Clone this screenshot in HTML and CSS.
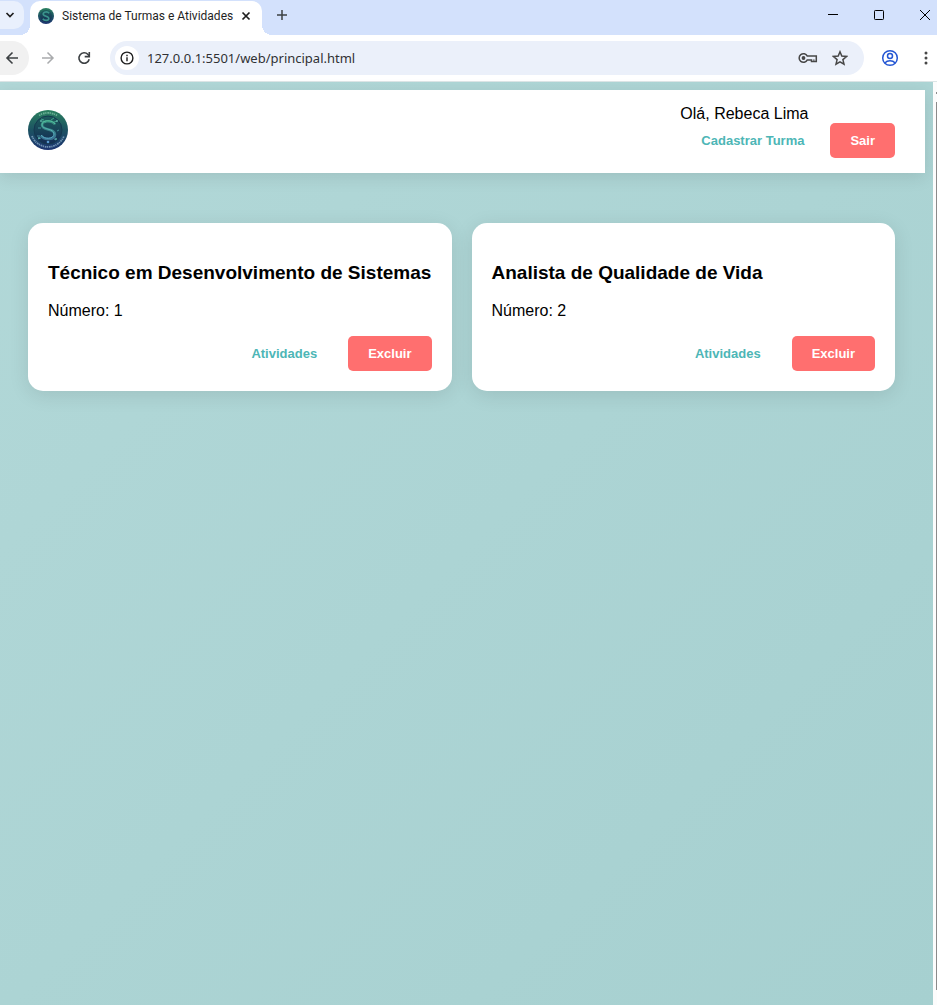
FILE: index.html
```html
<!DOCTYPE html>
<html lang="pt-BR">
<head>
<meta charset="utf-8">
<meta name="viewport" content="width=device-width, initial-scale=1">
<title>Sistema de Turmas e Atividades</title>
<link rel="stylesheet" href="styles.css">
</head>
<body>
<svg class="defs" aria-hidden="true">
  <defs>
    <linearGradient id="rim" x1="0" y1="0" x2="0" y2="1">
      <stop offset="0" stop-color="#2a805f"/><stop offset=".5" stop-color="#1c5262"/><stop offset="1" stop-color="#1d3470"/>
    </linearGradient>
    <linearGradient id="disc" x1="0" y1="0" x2="0" y2="1">
      <stop offset="0" stop-color="#1d5c5c"/><stop offset="1" stop-color="#142c55"/>
    </linearGradient>
    <linearGradient id="letter" x1="0" y1="0" x2="0" y2="1">
      <stop offset="0" stop-color="#4fc09a"/><stop offset="1" stop-color="#58a6c4"/>
    </linearGradient>
  </defs>
</svg>

<header class="tabs">
  <button class="tab-search" aria-label="Pesquisar guias"><svg width="10" height="6" viewBox="0 0 10 6"><path d="M1.5 1 5 4.5 8.500 1" fill="none" stroke="#1f1f1f" stroke-width="1.700"/></svg></button>
  <div class="tab">
    <svg class="favicon" width="16" height="16" viewBox="0 0 40 40" aria-hidden="true">
      <circle cx="20" cy="20" r="20" fill="url(#rim)"/><circle cx="20" cy="20" r="15" fill="url(#disc)"/>
      <path d="M28 13C24 8 13 9 13 15c0 7 14 4 14 11 0 6-11 7-15 1" fill="none" stroke="#3b948c" stroke-width="4"/>
    </svg>
    <span class="tab-title">Sistema de Turmas e Atividades</span>
    <button class="tab-close" aria-label="Fechar guia"><svg width="10" height="10" viewBox="0 0 10 10"><path d="m1.500 1.500 7 7m0-7-7 7" stroke="#1f1f1f" stroke-width="1.700"/></svg></button>
  </div>
  <button class="new-tab" aria-label="Nova guia"><svg width="12" height="12" viewBox="0 0 12 12"><path d="M6 1v10M1 6h10" stroke="#3c4043" stroke-width="1.500"/></svg></button>
  <div class="window-controls">
    <button aria-label="Minimizar"><svg width="12" height="12" viewBox="0 0 12 12"><path d="M1 5.500h10" stroke="#000"/></svg></button>
    <button aria-label="Maximizar"><svg width="12" height="12" viewBox="0 0 12 12"><rect x="1.500" y="1.500" width="9" height="9" rx=".8" fill="none" stroke="#000"/></svg></button>
    <button aria-label="Fechar"><svg width="12" height="12" viewBox="0 0 12 12"><path d="m1 1 10 10M11 1 1 11" stroke="#000"/></svg></button>
  </div>
</header>

<nav class="toolbar" aria-label="Navegação">
  <button class="nav back" aria-label="Voltar"><svg width="14" height="14" viewBox="0 0 14 14"><path d="M13 7H2m5.500-5.500L2 7l5.500 5.500" fill="none" stroke="#3c4043" stroke-width="1.600"/></svg></button>
  <button class="nav" aria-label="Avançar"><svg width="14" height="14" viewBox="0 0 14 14"><path d="M1 7h11M6.500 1.500 12 7l-5.500 5.500" fill="none" stroke="#a9abad" stroke-width="1.500"/></svg></button>
  <button class="nav" aria-label="Recarregar"><svg width="14" height="14" viewBox="0 0 14 14"><path d="M12.200 8.200A5.200 5.200 0 1 1 11 3.500L12.300 5" fill="none" stroke="#3c4043" stroke-width="1.600"/><path d="M12.300 1v4.600H7.700" fill="none" stroke="#3c4043" stroke-width="1.600"/></svg></button>
  <div class="omnibox">
    <button class="site-info" aria-label="Informações do site"><svg width="14" height="14" viewBox="0 0 14 14"><circle cx="7" cy="7" r="5.900" fill="none" stroke="#1f1f1f" stroke-width="1.400"/><path d="M7 6.200v4M7 3.700v1.500" stroke="#1f1f1f" stroke-width="1.400"/></svg></button>
    <input class="url" aria-label="Endereço" value="127.0.0.1:5501/web/principal.html">
    <button class="omni-action" aria-label="Senhas"><svg width="20" height="12" viewBox="0 0 20 12"><path d="M9.300 4.100A4.300 4.300 0 1 0 9.300 7.900H13.500V9.500H18.300V4.100Z" fill="none" stroke="#474747" stroke-width="1.500"/><circle cx="5.500" cy="6" r="1.900" fill="#474747"/><path d="M15.900 9.500V7.300" stroke="#474747"/></svg></button>
    <button class="omni-action" aria-label="Favoritar"><svg width="16" height="16" viewBox="0 0 16 16"><path d="m8 1.800 1.800 4.300 4.700.4-3.600 3.100 1.100 4.600L8 11.800l-4 2.400 1.100-4.600-3.600-3.100 4.700-.4Z" fill="none" stroke="#474747" stroke-width="1.500"/></svg></button>
  </div>
  <button class="profile" aria-label="Perfil"><svg width="18" height="18" viewBox="0 0 18 18" fill="none" stroke="#2456d3" stroke-width="1.500"><circle cx="9" cy="9" r="7.300"/><circle cx="9" cy="7" r="2.500"/><path d="M3.800 14c1.300-1.400 3-2.200 5.200-2.200s3.900.8 5.200 2.200"/></svg></button>
  <button class="menu" aria-label="Menu"><svg width="4" height="14" viewBox="0 0 4 14" fill="#474747"><circle cx="2" cy="2" r="1.500"/><circle cx="2" cy="7" r="1.500"/><circle cx="2" cy="12" r="1.500"/></svg></button>
</nav>

<div class="viewport">
  <div class="page">
    <header class="site-header">
      <svg class="logo" width="40" height="40" viewBox="0 0 40 40" role="img" aria-label="Sistema de Turmas e Atividades">
        <circle cx="20" cy="20" r="20" fill="url(#rim)"/>
        <circle cx="20" cy="20" r="14" fill="url(#disc)" stroke="#153950"/>
        <g fill="none" stroke="url(#letter)">
          <path d="M27 14.500c-2-4-13-5-13 .5 0 6 13 3 13 9.500 0 5.500-11 6-14 1" stroke-width="2.600" opacity=".55"/>
          <path d="M27 14c-2-4-13-5-13 1 0 5 12 3 12 9 0 5-10 6-13 1" stroke-width="1"/>
          <path d="m23 10 3-2M26 12l3-1M13 18h-3M16 10l-3-1M13 28l-3 1M29 21l2-1M26 29l2 1M18 12l-4-1M12 26H9" stroke-width="1" opacity=".7"/>
        </g>
        <g fill="#69c7b4" opacity=".8"><circle cx="29" cy="11" r="1"/><circle cx="13" cy="11" r="1"/><circle cx="11" cy="28" r="1"/><circle cx="28" cy="29" r="1"/></g>
        <circle cx="20" cy="32" r="1.300" fill="#5b9bd0"/>
        <path d="M11 5.500A17 17 0 0 1 29 5.500" fill="none" stroke="#7fc3a5" stroke-width="1.800" stroke-dasharray="1.700 .6 1.200 .9" opacity=".75"/>
        <path d="M4 26A17.200 17.200 0 0 0 36 26" fill="none" stroke="#8eb2cc" stroke-width="1.800" stroke-dasharray="1.700 .6 1.200 .8" opacity=".75"/>
      </svg>
      <div class="account">
        <span class="greeting">Olá, Rebeca Lima</span>
        <div class="account-actions">
          <button class="btn btn-link">Cadastrar Turma</button>
          <button class="btn btn-danger">Sair</button>
        </div>
      </div>
    </header>
    <main class="classes">
      <article class="card">
        <h3>Técnico em Desenvolvimento de Sistemas</h3>
        <p>Número: 1</p>
        <div class="card-actions">
          <button class="btn btn-link">Atividades</button>
          <button class="btn btn-danger">Excluir</button>
        </div>
      </article>
      <article class="card">
        <h3>Analista de Qualidade de Vida</h3>
        <p>Número: 2</p>
        <div class="card-actions">
          <button class="btn btn-link">Atividades</button>
          <button class="btn btn-danger">Excluir</button>
        </div>
      </article>
    </main>
  </div>
  <div class="scrollbar" aria-hidden="true"><div class="arrow"></div><div class="thumb"></div></div>
</div>
</body>
</html>
```
FILE: styles.css
```css
* { box-sizing: border-box; }

body {
  margin: 0;
  min-height: 100vh;
  display: flex;
  flex-direction: column;
  overflow-x: hidden;
  font-family: "Liberation Sans", Arial, sans-serif;
  font-size: 16px;
  line-height: 18px;
  color: #000;
}

button {
  display: inline-flex;
  align-items: center;
  justify-content: center;
  flex: none;
  margin: 0;
  padding: 0;
  border: 0;
  background: none;
  font: inherit;
  cursor: pointer;
}

svg { display: block; flex: none; }
.defs { position: absolute; width: 0; height: 0; }

/* Tab strip */
.tabs {
  display: flex;
  height: 35px;
  background: #d3e1fc;
}
.tab-search {
  width: 24px;
  height: 28px;
  margin-top: 1px;
  padding-right: 4px;
  border-radius: 0 10px 10px 0;
  background: #e9f0fd;
}
.tab {
  position: relative;
  display: flex;
  align-items: center;
  width: 232px;
  margin: 1px 0 0 6px;
  padding: 0 10px 5px 8px;
  border-radius: 10px 10px 0 0;
  background: #fff;
}
.tab::before,
.tab::after {
  content: "";
  position: absolute;
  bottom: 0;
  width: 10px;
  height: 10px;
}
.tab::before {
  right: 100%;
  background: radial-gradient(circle at 0 0, transparent 10px, #fff 10px);
}
.tab::after {
  left: 100%;
  background: radial-gradient(circle at 100% 0, transparent 10px, #fff 10px);
}
.tab-title {
  flex: 1;
  margin-left: 8px;
  font-family: Roboto, sans-serif;
  font-size: 12px;
  line-height: 16px;
  white-space: nowrap;
  color: #1f1f1f;
}
.tab-close { width: 12px; height: 16px; }
.new-tab { width: 20px; height: 28px; margin: 1px 0 0 10px; }
.window-controls { display: flex; margin-left: auto; }
.window-controls button { width: 46px; height: 30px; }
.window-controls button:last-child {
  justify-content: flex-start;
  width: 18px;
  margin-left: 17px;
}

/* Toolbar */
.toolbar {
  display: flex;
  align-items: center;
  height: 47px;
  border-bottom: 1px solid #dce5e6;
  background: #fff;
}
.nav { width: 36px; height: 34px; }
.nav.back {
  width: 29px;
  margin-right: 1px;
  padding-right: 5px;
  border-radius: 0 17px 17px 0;
  background: #f1f1f1;
}
.omnibox {
  display: flex;
  align-items: center;
  flex: 1;
  height: 34px;
  margin-left: 8px;
  padding: 0 8px 0 5px;
  border-radius: 17px;
  background: #ebf0fa;
}
.site-info {
  width: 24px;
  height: 24px;
  border-radius: 50%;
  background: #fff;
}
.url {
  flex: 1;
  min-width: 0;
  margin: 0 0 0 8px;
  padding: 0;
  border: 0;
  outline: 0;
  background: none;
  font-family: "Noto Sans", sans-serif;
  font-size: 13px;
  color: #303134;
}
.omni-action { width: 32px; height: 32px; }
.profile { width: 32px; height: 32px; margin-left: 10px; }
.menu { width: 31px; height: 32px; padding-left: 9px; }

/* Web page area */
.viewport { display: flex; flex: 1; }
.page {
  flex: 1;
  padding: 8px 8px 8px 0;
  background: linear-gradient(135deg, #b2d8d8, #a6d0d0);
}
.site-header {
  display: flex;
  align-items: center;
  justify-content: space-between;
  padding: 15px 30px 15px 28px;
  background: #fff;
  box-shadow: 0 4px 16px rgba(0, 0, 0, 0.1);
}
.logo { margin-top: -4px; }
.account-actions { display: flex; gap: 5px; }
.greeting { display: block; }

.btn {
  height: 35px;
  padding: 0 20px;
  border-radius: 5px;
  font-size: 13px;
  font-weight: bold;
  white-space: nowrap;
}
.btn-link { padding: 0 21px; color: #4db6b6; }
.btn-danger { background: #ff6f6f; color: #fff; }

.classes {
  display: grid;
  grid-template-columns: repeat(auto-fit, minmax(300px, 1fr));
  gap: 20px;
  padding: 50px 30px 20px 28px;
}
.card {
  padding: 20px;
  border-radius: 15px;
  background: #fff;
  box-shadow: 0 4px 20px rgba(0, 0, 0, 0.1);
}
.card h3 {
  margin: 19px 0;
  font-size: 19px;
  line-height: 21px;
}
.card p { margin: 0 0 16px; }
.card-actions {
  display: flex;
  justify-content: flex-end;
  gap: 10px;
}

.scrollbar {
  display: flex;
  flex-direction: column;
  width: 4px;
  padding: 10px 0 15px 3px;
  background: #fcfcfc;
}
.arrow { height: 2px; margin-bottom: 8px; background: #8b8b8b; }
.thumb { flex: 1; background: #8b8b8b; }
```
